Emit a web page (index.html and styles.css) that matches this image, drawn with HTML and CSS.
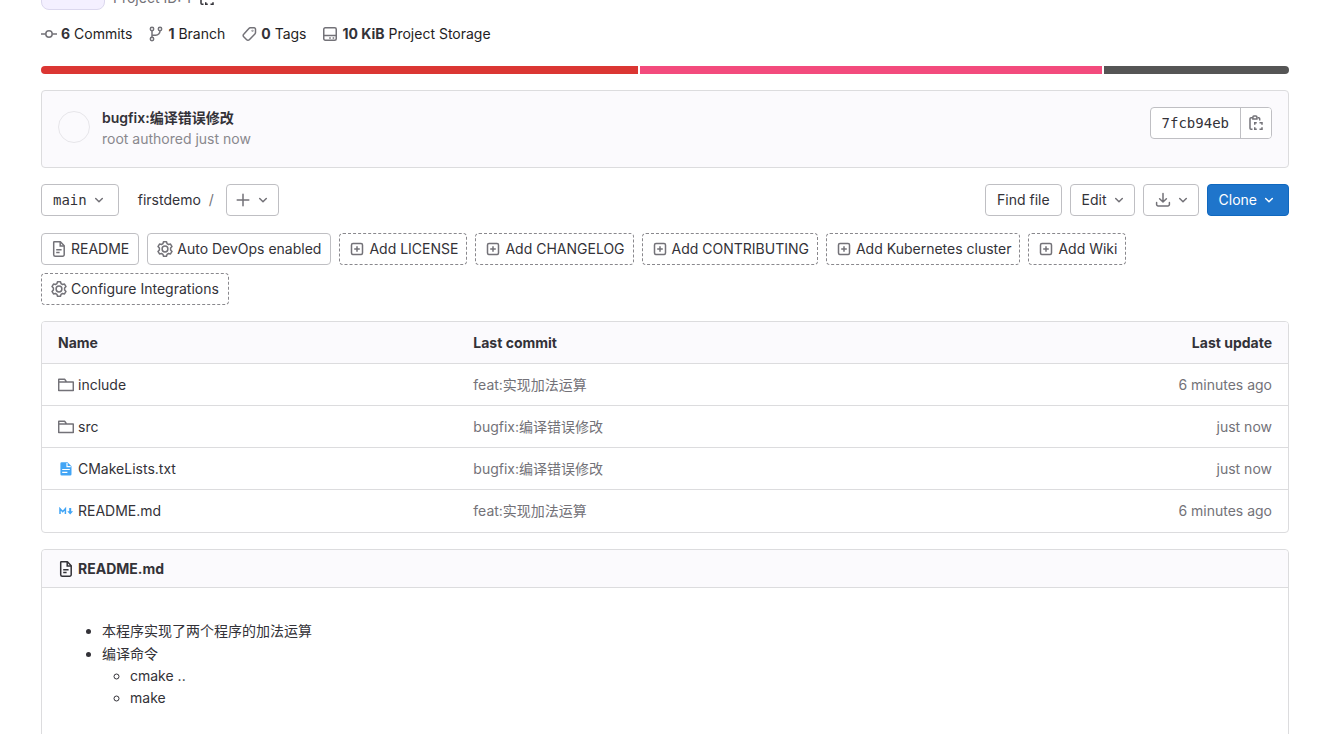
FILE: index.html
```html
<!DOCTYPE html>
<html lang="en">
<head>
<meta charset="utf-8">
<title>firstdemo</title>
<link rel="stylesheet" href="styles.css">
</head>
<body>
<svg class="sprite" aria-hidden="true">
  <symbol id="chevron" viewBox="0 0 16 16"><path d="M4.7 6.5 8 9.7l3.3-3.2" stroke-linecap="round" stroke-linejoin="round"/></symbol>
  <symbol id="commit" viewBox="0 0 16 16"><circle cx="8" cy="8" r="3.2"/><path d="M0 8h4.8M11.2 8H16"/></symbol>
  <symbol id="branch" viewBox="0 0 16 16"><circle cx="4" cy="3" r="1.7"/><circle cx="4" cy="13" r="1.7"/><circle cx="12" cy="3" r="1.7"/><path d="M4 4.7v6.6M4 9.2h3.5A4.3 4.3 0 0 0 12 4.8"/></symbol>
  <symbol id="tag" viewBox="0 0 16 16"><path d="M9.2 1.8h4a1.3 1.3 0 0 1 1.3 1.3v3.5a2 2 0 0 1-.6 1.4l-5.6 5.8a1.8 1.8 0 0 1-2.6 0l-3-3a1.8 1.8 0 0 1 0-2.6l5.2-5.8a2 2 0 0 1 1.3-.6z" stroke-linejoin="round"/><circle cx="11.5" cy="4.7" r=".3"/></symbol>
  <symbol id="disk" viewBox="0 0 16 16"><rect x="1.75" y="1.75" width="12.5" height="12.5" rx="1.5"/><path d="M2 9.5h12M7.2 12h1.6M10.6 12h1.6"/></symbol>
  <symbol id="copy" viewBox="0 0 16 16"><path d="M4.8 2.75H3a1 1 0 0 0-1 1v9.5a1 1 0 0 0 1 1h1.500M9.500 2.750h1.200a1 1 0 0 1 1 1V5.500"/><path d="M4.900 4V2a1 1 0 0 1 1-1h2a1 1 0 0 1 1 1v2z"/><path d="M6.750 9.800V7.750h2M11.500 7.750h2.500v2.050M14 12.200v2.050h-2.500M8.750 14.250h-2V12.200"/></symbol>
  <symbol id="plus" viewBox="0 0 16 16"><path d="M8 2.2v11.6M2.2 8h11.6" stroke-linecap="round"/></symbol>
  <symbol id="download" viewBox="0 0 16 16"><path d="M8 1.5v8.2M4.6 6.7 8 10l3.4-3.3M1.6 10.5v2a1.5 1.5 0 0 0 1.5 1.5h9.8a1.5 1.5 0 0 0 1.5-1.5v-2" stroke-linecap="round" stroke-linejoin="round"/></symbol>
  <symbol id="doc" viewBox="0 0 16 16"><path d="M3.2 .8h6.2L13.2 4.7v9a1.5 1.5 0 0 1-1.5 1.5H4.2a1.5 1.5 0 0 1-1.5-1.5V1.3a.5.5 0 0 1 .5-.5z" stroke-linejoin="round"/><path d="M9.2 1v3.9h3.9M5.2 8.7h5.4M5.2 11.4h3.4"/></symbol>
  <symbol id="gear" viewBox="0 0 16 16"><path d="M6.500.8h3l.6 1.900 1.400.8 2-.4 1.500 2.500L13.600 7.100v1.800l1.400 1.500-1.500 2.500-2-.4-1.400.8-.6 1.900h-3l-.6-1.900-1.400-.8-2 .4L1 10.400l1.400-1.500V7.100L1 5.600l1.500-2.500 2 .4 1.400-.8z" stroke-linejoin="round"/><circle cx="8" cy="8" r="2.900"/></symbol>
  <symbol id="plusbox" viewBox="0 0 16 16"><rect x="2.500" y="2.500" width="11" height="11" rx="1.500"/><path d="M8 5.200v5.600M5.200 8h5.600"/></symbol>
  <symbol id="folder" viewBox="0 0 16 16"><path d="M.7 13.500V2.300h6.100l1.700 2.700h6.800v8.500zM.7 5h7.800" stroke-linejoin="round"/></symbol>
  <symbol id="textfile" viewBox="0 0 16 16"><path class="solid" d="M3.700 1.300h5.800L13.500 5.300v8a1.300 1.300 0 0 1-1.300 1.300H3.700a1.300 1.300 0 0 1-1.300-1.300V2.600a1.300 1.300 0 0 1 1.300-1.300z"/><path class="cut" d="M9 2v3.700h3.700M4.200 8.500h7.600M4.200 11.400h5.200"/></symbol>
  <symbol id="markdown" viewBox="0 0 16 16"><path d="M2 11V5.700l2.700 3 2.700-3V11"/><path class="solid" d="M11.200 5h2v3.300h1.900L12.200 11.500 9.300 8.300h1.900z"/></symbol>
</svg>

<main class="page">
  <div class="identity">
    <span class="avatar"></span>
    <span class="project-id">Project ID: 1</span>
    <button class="plain" aria-label="Copy project ID"><svg class="icon dark"><use href="#copy"/></svg></button>
  </div>

  <nav class="stats">
    <a href="#"><svg class="icon"><use href="#commit"/></svg><span><strong>6</strong> Commits</span></a>
    <a href="#"><svg class="icon"><use href="#branch"/></svg><span><strong>1</strong> Branch</span></a>
    <a href="#"><svg class="icon"><use href="#tag"/></svg><span><strong>0</strong> Tags</span></a>
    <a href="#"><svg class="icon"><use href="#disk"/></svg><span><strong>10 KiB</strong> Project Storage</span></a>
  </nav>

  <div class="languages">
    <span class="red"></span><span class="pink"></span><span class="grey"></span>
  </div>

  <section class="commit">
    <span class="author"></span>
    <div class="commit-text">
      <a class="commit-title" href="#">bugfix:编译错误修改</a>
      <div class="commit-meta">root authored just now</div>
    </div>
    <div class="sha">
      <span class="sha-text">7fcb94eb</span>
      <button class="sha-copy" aria-label="Copy commit SHA"><svg class="icon"><use href="#copy"/></svg></button>
    </div>
  </section>

  <div class="toolbar">
    <button class="btn mono">main<svg class="icon"><use href="#chevron"/></svg></button>
    <div class="crumbs"><a href="#">firstdemo</a><span class="slash">/</span></div>
    <button class="btn tight add" aria-label="Add to tree"><svg class="icon"><use href="#plus"/></svg><svg class="icon"><use href="#chevron"/></svg></button>
    <div class="actions">
      <button class="btn">Find file</button>
      <button class="btn tight">Edit<svg class="icon"><use href="#chevron"/></svg></button>
      <button class="btn tight" aria-label="Download"><svg class="icon"><use href="#download"/></svg><svg class="icon"><use href="#chevron"/></svg></button>
      <button class="btn primary">Clone<svg class="icon"><use href="#chevron"/></svg></button>
    </div>
  </div>

  <nav class="pills">
    <a class="pill solid-line" href="#"><svg class="icon"><use href="#doc"/></svg>README</a>
    <a class="pill solid-line" href="#"><svg class="icon"><use href="#gear"/></svg>Auto DevOps enabled</a>
    <a class="pill new" href="#"><svg class="icon"><use href="#plusbox"/></svg>Add LICENSE</a>
    <a class="pill new" href="#"><svg class="icon"><use href="#plusbox"/></svg>Add CHANGELOG</a>
    <a class="pill new" href="#"><svg class="icon"><use href="#plusbox"/></svg>Add CONTRIBUTING</a>
    <a class="pill new" href="#"><svg class="icon"><use href="#plusbox"/></svg>Add Kubernetes cluster</a>
    <a class="pill new" href="#"><svg class="icon"><use href="#plusbox"/></svg>Add Wiki</a>
    <a class="pill" href="#"><svg class="icon"><use href="#gear"/></svg>Configure Integrations</a>
  </nav>

  <div class="files">
    <table>
      <thead>
        <tr><th>Name</th><th>Last commit</th><th class="when">Last update</th></tr>
      </thead>
      <tbody>
        <tr><td><a class="file" href="#"><svg class="icon"><use href="#folder"/></svg>include</a></td><td><a class="message" href="#">feat:实现加法运算</a></td><td class="when">6 minutes ago</td></tr>
        <tr><td><a class="file" href="#"><svg class="icon"><use href="#folder"/></svg>src</a></td><td><a class="message" href="#">bugfix:编译错误修改</a></td><td class="when">just now</td></tr>
        <tr><td><a class="file" href="#"><svg class="icon blue"><use href="#textfile"/></svg>CMakeLists.txt</a></td><td><a class="message" href="#">bugfix:编译错误修改</a></td><td class="when">just now</td></tr>
        <tr><td><a class="file" href="#"><svg class="icon blue"><use href="#markdown"/></svg>README.md</a></td><td><a class="message" href="#">feat:实现加法运算</a></td><td class="when">6 minutes ago</td></tr>
      </tbody>
    </table>
  </div>

  <article class="readme">
    <header><svg class="icon dark"><use href="#doc"/></svg><a href="#">README.md</a></header>
    <div class="readme-body">
      <ul>
        <li>本程序实现了两个程序的加法运算</li>
        <li class="commands">编译命令
          <ul>
            <li>cmake ..</li>
            <li>make</li>
          </ul>
        </li>
      </ul>
    </div>
  </article>
</main>
</body>
</html>
```
FILE: styles.css
```css
* { box-sizing: border-box; }

body {
  margin: 0;
  overflow-x: hidden;
  background: #fff;
  color: #333238;
  font: 14px/20px Inter, "Noto Sans CJK SC", sans-serif;
}

html { overflow: hidden; }
a { color: inherit; text-decoration: none; }
strong { font-weight: 700; }

button {
  margin: 0;
  color: inherit;
  font: inherit;
  cursor: pointer;
}

.sprite { display: none; }

.icon {
  flex: none;
  width: 16px;
  height: 16px;
  fill: none;
  stroke: #737278;
  stroke-width: 1.5;
}
.icon.dark { stroke: #333238; }
.icon.blue { stroke: #42a5f5; }
.solid { fill: #42a5f5; stroke: none; }
.cut { stroke: #fff; stroke-width: 1.2; }

.page { padding: 0 49px 0 41px; }

/* Project header */
.identity {
  display: flex;
  align-items: flex-end;
  height: 64px;
  margin-top: -54px;
}
.avatar {
  width: 64px;
  height: 64px;
  margin-right: 8px;
  border: 1px solid #dcd8ee;
  border-radius: 8px;
  background: #f4f0ff;
}
.project-id { color: #737278; line-height: 24px; }
.plain {
  display: flex;
  margin-left: 8px;
  padding: 0 0 4px;
  border: 0;
  background: none;
}

.stats {
  display: flex;
  gap: 16px;
  padding: 14px 0 22px;
  color: #1f1e24;
}
.stats a { display: flex; align-items: center; gap: 4px; }
.stats strong { color: #333238; }

.languages {
  display: flex;
  gap: 2px;
  height: 8px;
  overflow: hidden;
  border-radius: 4px;
}
.red { flex: 597; background: #db3633; }
.pink { flex: 462; background: #f34b7d; }
.grey { flex: 185; background: #555; }

/* Latest commit */
.commit {
  display: flex;
  align-items: flex-start;
  margin: 16px 0;
  padding: 16px;
  min-height: 78px;
  border: 1px solid #dcdcde;
  border-radius: 4px;
  background: #fbfafd;
}
.author {
  width: 32px;
  height: 32px;
  margin: 4px 12px 0 0;
  border: 1px solid #e7e6ea;
  border-radius: 50%;
}
.commit-text { flex: 1; line-height: 21px; }
.commit-title { display: block; font-weight: 600; }
.commit-meta { color: #89888d; }
.sha {
  display: flex;
  height: 32px;
  overflow: hidden;
  border: 1px solid #bfbfc3;
  border-radius: 4px;
  background: #fff;
}
.sha-text {
  padding: 0 11px;
  font: 14px/30px "DejaVu Sans Mono", monospace;
}
.sha-copy {
  padding: 7px;
  border: 0;
  border-left: 1px solid #bfbfc3;
  background: #fff;
}
.sha-copy .icon { display: block; }

/* Tree controls */
.toolbar, .actions { display: flex; align-items: center; }
.actions { gap: 8px; margin-left: auto; }
.btn {
  display: flex;
  align-items: center;
  gap: 4px;
  height: 32px;
  padding: 0 11px;
  border: 1px solid #bfbfc3;
  border-radius: 4px;
  background: #fff;
}
.tight { padding-right: 7px; }
.add { padding-left: 8px; }
.mono { font-family: "DejaVu Sans Mono", monospace; }
.crumbs { display: flex; gap: 8px; padding: 0 16px 0 19px; }
.crumbs + .add { margin-left: -4px; }
.slash { color: #737278; }
.primary { border-color: #1068bf; background: #1f75cb; color: #fff; }
.primary .icon { stroke: #fff; }

.pills {
  display: flex;
  flex-wrap: wrap;
  gap: 8px;
  padding: 17px 0 16px;
}
.pill {
  display: flex;
  align-items: center;
  gap: 4px;
  height: 32px;
  padding: 0 9px;
  border: 1px dashed #89888d;
  border-radius: 4px;
}
.solid-line { border: 1px solid #bfbfc3; }
.new { padding-right: 8px; }

/* File list */
.files {
  overflow: hidden;
  border: 1px solid #dcdcde;
  border-radius: 4px;
}
table {
  width: 100%;
  border-collapse: separate;
  border-spacing: 0;
  table-layout: fixed;
}
th, td {
  height: 42px;
  padding: 0 16px;
  border-bottom: 1px solid #dcdcde;
  text-align: left;
}
tbody tr:last-child td { border-bottom: 0; }
th { background: #fbfafd; font-weight: 700; }
.file { display: flex; align-items: center; gap: 4px; }
.message, td.when { color: #737278; }
th.when, td.when { text-align: right; }

/* Readme */
.readme {
  margin-top: 16px;
  border: 1px solid #dcdcde;
  border-radius: 4px;
}
.readme header {
  display: flex;
  align-items: center;
  gap: 4px;
  height: 38px;
  padding: 0 16px;
  border-bottom: 1px solid #dcdcde;
  border-radius: 4px 4px 0 0;
  background: #fbfafd;
  font-weight: 700;
}
.readme-body { padding: 32px; line-height: 22px; }
.readme-body ul { margin: 0; padding-left: 28px; }
.commands { margin-top: 1px; }
```
